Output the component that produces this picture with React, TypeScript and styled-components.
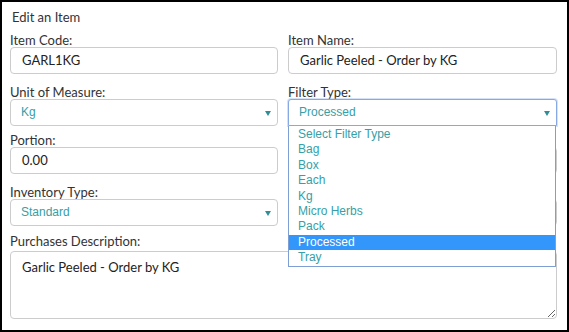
import React from "react";
import styled, { createGlobalStyle } from "styled-components";

const GlobalStyle = createGlobalStyle`
  body {
    margin: 0;
    background: #fff;
    font-family: Lato, "Open Sans", sans-serif;
  }
`;

const Frame = styled.div`
  width: 569px;
  height: 332px;
  box-sizing: border-box;
  border: 2px solid #000;
  padding: 6px 10px 0 8px;
  background: #fff;
`;

const Title = styled.div`
  font-size: 13px;
  line-height: 18px;
  color: #333;
  margin: 0 0 6px 2px;
`;

const Grid = styled.div`
  display: grid;
  grid-template-columns: 268px 269px;
  column-gap: 10px;
`;

const Field = styled.div<{ $gap?: number; $wide?: boolean }>`
  position: relative;
  margin-bottom: ${(p) => p.$gap ?? 8}px;
  grid-column: ${(p) => (p.$wide ? "1 / span 2" : "auto")};
`;

const Label = styled.label`
  display: block;
  height: 15px;
  line-height: 16px;
  font-size: 13px;
  color: #333;
`;

const TextBox = styled.div`
  box-sizing: border-box;
  height: 27px;
  border: 1px solid #ccc;
  border-radius: 4px;
  padding: 0 11px;
  font-size: 13px;
  line-height: 25px;
  color: #222;
  background: #fff;
`;

const SelectBox = styled.div<{ $focused?: boolean }>`
  position: relative;
  box-sizing: border-box;
  height: 27px;
  border: 1px solid ${(p) => (p.$focused ? "#86a9e4" : "#ccc")};
  box-shadow: ${(p) => (p.$focused ? "0 0 0 1px rgba(134,169,228,0.35)" : "none")};
  border-radius: ${(p) => (p.$focused ? "3px 3px 0 0" : "4px")};
  padding: 0 10px;
  font-family: "Liberation Sans", Arial, sans-serif;
  font-size: 12px;
  line-height: 25px;
  color: #35a0a8;
  background: #fff;
`;

const Arrow = styled.span`
  position: absolute;
  right: 6px;
  top: 11px;
  width: 0;
  height: 0;
  border-left: 3px solid transparent;
  border-right: 3px solid transparent;
  border-top: 5px solid #2f8e96;
`;

const List = styled.ul`
  position: absolute;
  left: 0;
  right: 1px;
  top: 42px;
  margin: 0;
  padding: 1px 0 0;
  list-style: none;
  border: 1px solid #7d9fd3;
  border-top: none;
  background: #fff;
  z-index: 2;
  font-family: "Liberation Sans", Arial, sans-serif;
  font-size: 12px;
`;

const Option = styled.li<{ $active?: boolean }>`
  height: 15.4px;
  line-height: 15.4px;
  padding-left: 9px;
  color: ${(p) => (p.$active ? "#fff" : "#35a0a8")};
  background: ${(p) => (p.$active ? "#3296fa" : "transparent")};
`;

const Area = styled.textarea`
  display: block;
  box-sizing: border-box;
  width: 100%;
  height: 68px;
  margin-top: 3px;
  border: 1px solid #ccc;
  border-radius: 4px;
  padding: 6px 11px;
  font-family: Lato, "Open Sans", sans-serif;
  font-size: 13px;
  line-height: 18px;
  color: #222;
  outline: none;
`;

const filterTypes = [
  "Select Filter Type",
  "Bag",
  "Box",
  "Each",
  "Kg",
  "Micro Herbs",
  "Pack",
  "Processed",
  "Tray",
];

export default function App() {
  return (
    <>
      <GlobalStyle />
      <Frame>
        <Title>Edit an Item</Title>
        <Grid>
          <Field $gap={10}>
            <Label>Item Code:</Label>
            <TextBox>GARL1KG</TextBox>
          </Field>
          <Field $gap={10}>
            <Label>Item Name:</Label>
            <TextBox>Garlic Peeled - Order by KG</TextBox>
          </Field>

          <Field $gap={6}>
            <Label>Unit of Measure:</Label>
            <SelectBox>
              Kg
              <Arrow />
            </SelectBox>
          </Field>
          <Field $gap={6}>
            <Label>Filter Type:</Label>
            <SelectBox $focused>
              Processed
              <Arrow />
            </SelectBox>
            <List>
              {filterTypes.map((t) => (
                <Option key={t} $active={t === "Processed"}>
                  {t}
                </Option>
              ))}
            </List>
          </Field>

          <Field $gap={10}>
            <Label>Portion:</Label>
            <TextBox>0.00</TextBox>
          </Field>
          {/* fields hidden under the open dropdown */}
          <Field $gap={10}>
            <Label />
            <TextBox />
          </Field>

          <Field $gap={7}>
            <Label>Inventory Type:</Label>
            <SelectBox>
              Standard
              <Arrow />
            </SelectBox>
          </Field>
          <Field $gap={7}>
            <Label />
            <SelectBox />
          </Field>

          <Field $wide>
            <Label>Purchases Description:</Label>
            <Area defaultValue="Garlic Peeled - Order by KG" />
          </Field>
        </Grid>
      </Frame>
    </>
  );
}
